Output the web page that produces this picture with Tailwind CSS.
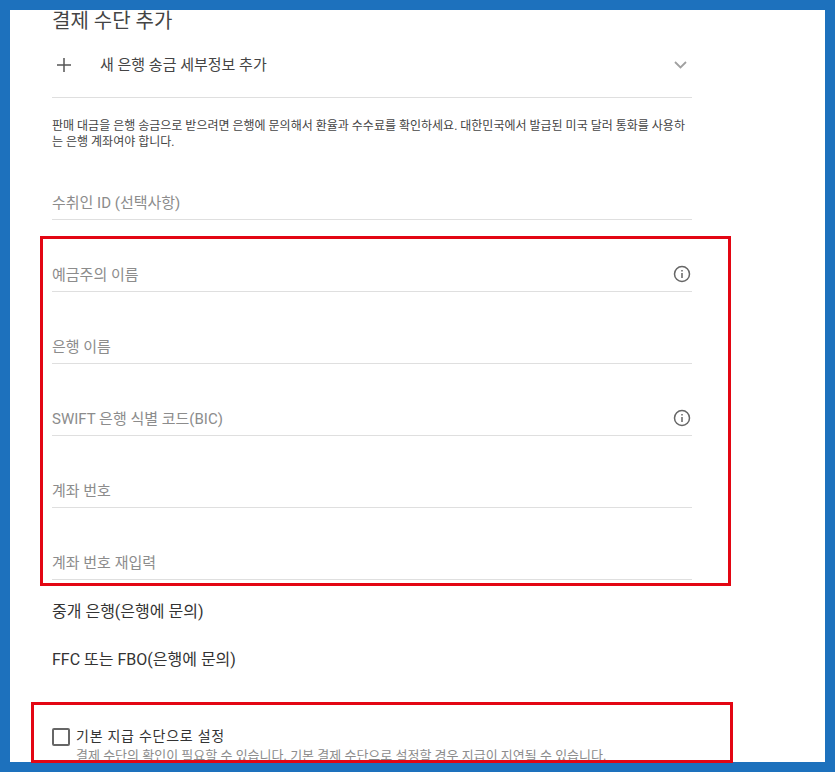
<html lang="ko">
<head>
    <meta charset="UTF-8">
    <title>결제 수단 추가</title>
    <script src="https://cdn.jsdelivr.net/npm/@tailwindcss/browser@4"></script>
</head>
<body class="bg-[#1d71bd]">
    <div class="relative w-[835px] h-[772px] overflow-hidden font-['Roboto','Noto_Sans_CJK_KR',sans-serif]">
        <main class="absolute left-[10px] top-[10px] w-[815px] h-[752px] overflow-hidden bg-white pl-[42px] text-[#3c4043]">
            <div class="w-[640px]">
                <h1 class="h-[23px] text-[20px] leading-[23px] text-[#444]">결제 수단 추가</h1>

                <!-- bank transfer row -->
                <div class="flex h-[65px] items-center border-b border-[#dfdfdf]">
                    <svg class="ml-[4px] w-[16px] h-[16px]" viewBox="0 0 16 16" fill="none" stroke="#555" stroke-width="1.5"><path d="M8 1v14M1 8h14"/></svg>
                    <span class="ml-[28px] text-[15px] text-[#444]">새 은행 송금 세부정보 추가</span>
                    <svg class="ml-auto mr-[5px] w-[13px] h-[8px]" viewBox="0 0 13 8" fill="none" stroke="#a0a0a0" stroke-width="1.8"><path d="M1 1l5.5 5.5L12 1"/></svg>
                </div>

                <p class="mt-[20px] text-[12px] leading-[16px] text-[#444]">판매 대금을 은행 송금으로 받으려면 은행에 문의해서 환율과 수수료를 확인하세요. 대한민국에서 발급된 미국 달러 통화를 사용하는 은행 계좌여야 합니다.</p>

                <div class="mt-[37px] flex h-[33px] items-center border-b border-[#dfdfdf] pt-[1px] text-[15px] text-[#8c8c8c]">수취인 ID (선택사항)</div>

                <div class="mt-[39px] flex h-[33px] items-center justify-between border-b border-[#dfdfdf] pt-[1px] text-[15px] text-[#8c8c8c]">
                    <span>예금주의 이름</span>
                    <svg class="w-[18px] h-[18px] mr-px -mt-[4px]" viewBox="0 0 18 18" fill="none" stroke="#666" stroke-width="1.5"><circle cx="9" cy="9" r="7.5"/><path d="M9 8v5M9 5v1.6"/></svg>
                </div>
                <div class="mt-[39px] flex h-[33px] items-center border-b border-[#dfdfdf] pt-[1px] text-[15px] text-[#8c8c8c]">은행 이름</div>
                <div class="mt-[39px] flex h-[33px] items-center justify-between border-b border-[#dfdfdf] pt-[1px] text-[15px] text-[#8c8c8c]">
                    <span>SWIFT 은행 식별 코드(BIC)</span>
                    <svg class="w-[18px] h-[18px] mr-px -mt-[4px]" viewBox="0 0 18 18" fill="none" stroke="#666" stroke-width="1.5"><circle cx="9" cy="9" r="7.5"/><path d="M9 8v5M9 5v1.6"/></svg>
                </div>
                <div class="mt-[39px] flex h-[33px] items-center border-b border-[#dfdfdf] pt-[1px] text-[15px] text-[#8c8c8c]">계좌 번호</div>
                <div class="mt-[39px] flex h-[33px] items-center border-b border-[#dfdfdf] pt-[1px] text-[15px] text-[#8c8c8c]">계좌 번호 재입력</div>

                <div class="mt-[20px] h-[24px] text-[16px] leading-[24px] text-[#333]">중개 은행(은행에 문의)</div>
                <div class="mt-[24px] h-[24px] text-[16px] leading-[24px] text-[#333]">FFC 또는 FBO(은행에 문의)</div>

                <div class="mt-[55px] flex items-start">
                    <div class="mt-[1px] w-[18px] h-[18px] shrink-0 rounded-[2px] border-2 border-[#666]"></div>
                    <div class="ml-[6px] whitespace-nowrap">
                        <div class="h-[20px] text-[14px] tracking-[0.75px] leading-[19px] text-[#333]">기본 지급 수단으로 설정</div>
                        <div class="text-[13px] leading-[18px] text-[#8c8c8c]">결제 수단의 확인이 필요할 수 있습니다. 기본 결제 수단으로 설정할 경우 지급이 지연될 수 있습니다.</div>
                    </div>
                </div>
            </div>
        </main>

        <!-- red annotation boxes -->
        <div class="absolute left-[40px] top-[236px] w-[691px] h-[350px] border-[3px] border-[#e30613]"></div>
        <div class="absolute left-[31px] top-[702px] w-[702px] h-[61px] border-[3px] border-[#e30613]"></div>
    </div>
</body>
</html>
